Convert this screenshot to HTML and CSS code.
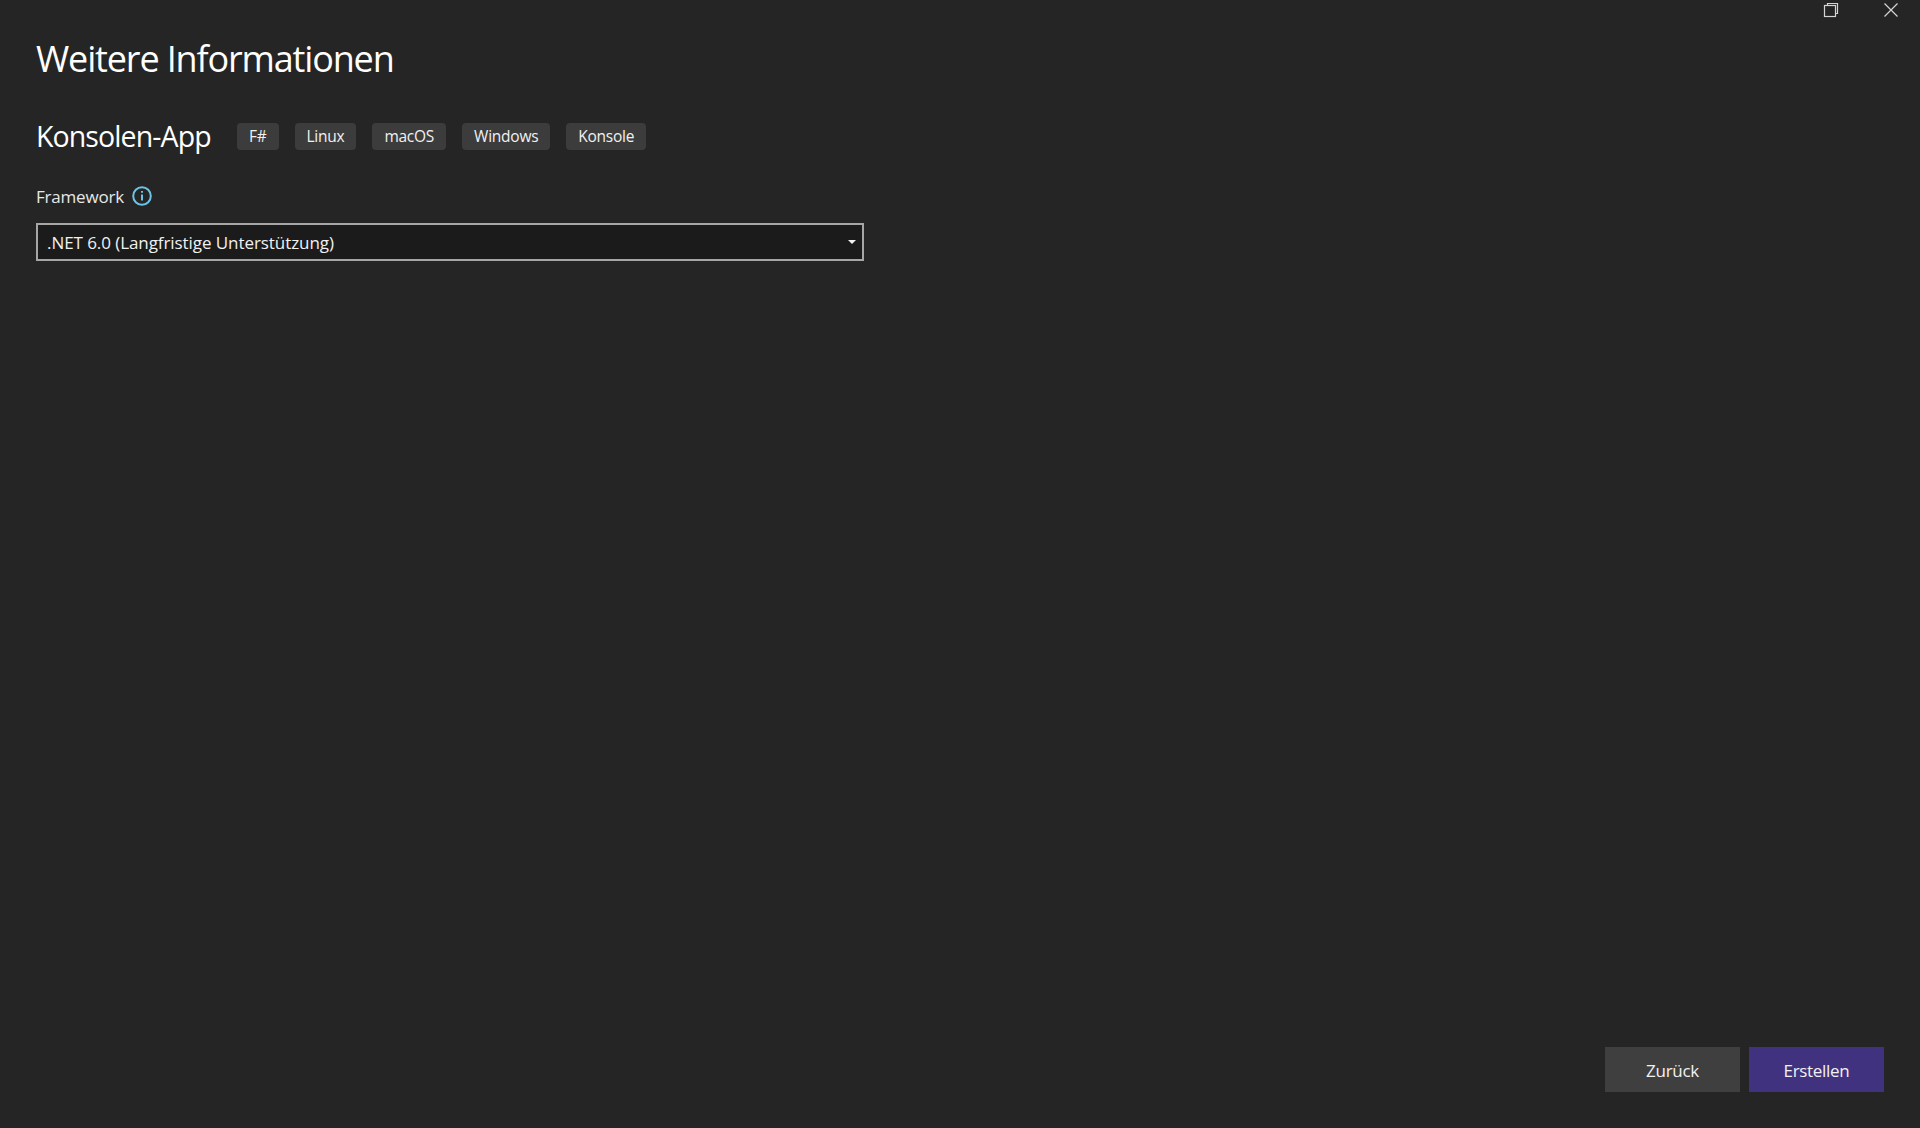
FILE: index.html
```html
<!DOCTYPE html>
<html lang="de">
<head>
<meta charset="utf-8">
<title>Weitere Informationen</title>
<link rel="stylesheet" href="styles.css">
</head>
<body>
<div class="window">
  <div class="titlebar">
    <svg class="winicon restore" width="16" height="16" viewBox="0 0 16 16" fill="none" stroke="#d4d4d4" stroke-width="1.2"><path d="M4.5 3.5V1.5H14.5V11.5H12.5"/><rect x="1.5" y="3.5" width="11" height="11"/></svg>
    <svg class="winicon close" width="16" height="16" viewBox="0 0 16 16" fill="none" stroke="#d4d4d4" stroke-width="1.2"><path d="M1.5 1.5L14.5 14.5M14.5 1.5L1.5 14.5"/></svg>
  </div>
  <main class="content">
    <h1 class="title">Weitere Informationen</h1>
    <div class="template">
      <h2 class="name">Konsolen-App</h2>
      <ul class="tags">
        <li class="tag">F#</li>
        <li class="tag">Linux</li>
        <li class="tag">macOS</li>
        <li class="tag">Windows</li>
        <li class="tag">Konsole</li>
      </ul>
    </div>
    <div class="label">
      <span>Framework</span>
      <svg width="20" height="20" viewBox="0 0 20 20" fill="none" stroke="#6cc3e8" stroke-width="2"><circle cx="10" cy="10" r="8.8"/><path d="M10 8.6V14.6"/><path d="M10 5V6.8"/></svg>
    </div>
    <div class="select">
      <span>.NET 6.0 (Langfristige Unterstützung)</span>
      <span class="caret"></span>
    </div>
  </main>
  <footer class="footer">
    <button class="btn">Zurück</button>
    <button class="btn primary">Erstellen</button>
  </footer>
</div>
</body>
</html>
```
FILE: styles.css
```css
* { box-sizing: border-box; }
html, body { margin: 0; padding: 0; height: 100%; }
body {
  background: #252525;
  color: #f1f1f1;
  font-family: "Open Sans", "Noto Sans", sans-serif;
  overflow: hidden;
}
.window { display: flex; flex-direction: column; height: 1128px; }
.titlebar {
  display: flex;
  justify-content: flex-end;
  align-items: flex-start;
  gap: 44px;
  padding: 2px 21px 0 0;
  height: 35px;
}
.winicon { display: block; flex: none; }
.content { flex: 1; padding: 0 36px; display: flex; flex-direction: column; }
.title {
  margin: 0;
  font-size: 36px;
  font-weight: 400;
  line-height: 48px;
  letter-spacing: -1.15px;
  color: #fff;
}
.template { display: flex; align-items: center; margin-top: 36px; height: 34px; }
.name {
  margin: 0;
  font-size: 28.5px;
  font-weight: 400;
  line-height: 34px;
  letter-spacing: -0.9px;
  width: 201px;
  white-space: nowrap;
  color: #fff;
}
.tags { list-style: none; margin: 0; padding: 0; display: flex; gap: 16px; }
.tag {
  height: 27px;
  padding: 0 12px;
  border-radius: 4px;
  background: #3c3c3c;
  font-size: 15.5px;
  line-height: 27px;
  letter-spacing: -0.25px;
  color: #f1f1f1;
  white-space: nowrap;
}
.label {
  display: flex;
  align-items: center;
  gap: 8px;
  margin-top: 30px;
  height: 26px;
  font-size: 17px;
  letter-spacing: -0.2px;
  color: #e8e8e8;
}
.select {
  display: flex;
  align-items: center;
  justify-content: space-between;
  width: 828px;
  height: 38px;
  margin-top: 14px;
  padding: 0 9px;
  background: #1b1b1c;
  border: 2px solid #a6a6a6;
  font-size: 17px;
  letter-spacing: -0.07px;
  color: #f1f1f1;
}
.caret {
  width: 0;
  height: 0;
  border-left: 4.5px solid transparent;
  border-right: 4.5px solid transparent;
  border-top: 4.5px solid #f1f1f1;
  margin-right: -3px;
}
.footer { display: flex; justify-content: flex-end; gap: 9px; padding: 0 36px 36px 0; }
.btn {
  width: 135px;
  height: 45px;
  border: 0;
  padding: 1px 0 0;
  background: #3f3f40;
  color: #f1f1f1;
  font-family: inherit;
  font-size: 17px;
  letter-spacing: -0.3px;
}
.primary { background: #41327f; }
```
